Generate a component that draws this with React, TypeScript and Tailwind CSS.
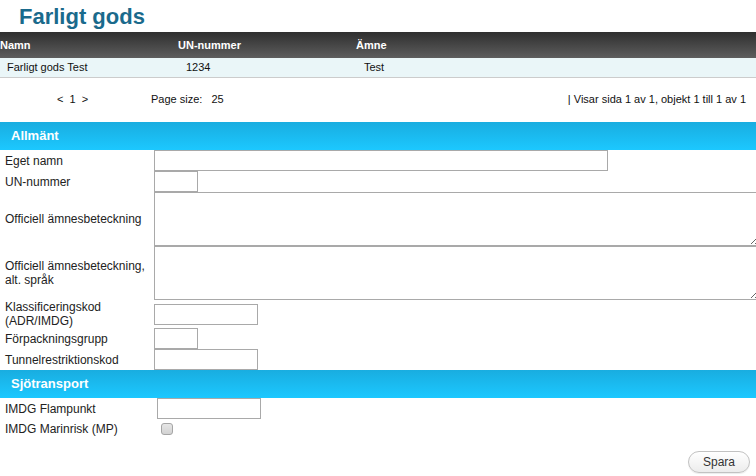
import React from "react";

const inputCls =
  "block h-[21px] border border-[#a9a9a9] bg-white outline-none";

const SectionHeader = ({ title }: { title: string }) => (
  <div className="h-[28px] bg-gradient-to-b from-[#19ade0] to-[#1cc8ff] flex items-center pl-[11px]">
    <span className="text-[13px] font-bold text-white">{title}</span>
  </div>
);

const FormRow = ({
  label,
  children,
  labelWidth = "w-[154px]",
}: {
  label: React.ReactNode;
  children: React.ReactNode;
  labelWidth?: string;
}) => (
  <div className="flex items-center">
    <div className={`${labelWidth} shrink-0 pl-[5px] text-[12px] leading-[14px] text-[#222]`}>
      {label}
    </div>
    <div className="flex-1">{children}</div>
  </div>
);

const App = () => {
  return (
    <div className="w-[756px] h-[476px] overflow-hidden bg-white font-['Liberation_Sans',Arial,sans-serif] text-[#111]">
      <div className="h-[32px] pl-[19px] pt-[4px]">
        <h1 className="text-[22px] leading-[25px] font-bold text-[#1a6a8c]">Farligt gods</h1>
      </div>

      {/* list */}
      <div className="grid grid-cols-[178px_178px_1fr] h-[26px] items-center bg-gradient-to-b from-[#2f2f2f] to-[#5e5e5e] text-[11px] font-bold text-white">
        <span>Namn</span>
        <span>UN-nummer</span>
        <span>Ämne</span>
      </div>
      <div className="grid grid-cols-[178px_178px_1fr] h-[20px] items-center bg-[#eaf6f8] border-b border-[#cccccc] text-[11px]">
        <span className="pl-[7px]">Farligt gods Test</span>
        <span className="pl-[8px]">1234</span>
        <span className="pl-[8px]">Test</span>
      </div>
      <div className="h-[44px] flex items-center text-[11px] pb-[2px]">
        <span className="pl-[57px] w-[151px]">&lt;&nbsp; 1 &nbsp;&gt;</span>
        <span>Page size:</span>
        <span className="ml-[9px]">25</span>
        <span className="ml-auto pr-[10px]">| Visar sida 1 av 1, objekt 1 till 1 av 1</span>
      </div>

      {/* Allmänt */}
      <SectionHeader title="Allmänt" />
      <div className="flex flex-col">
        <FormRow label="Eget namn">
          <input className={`${inputCls} w-[454px]`} />
        </FormRow>
        <FormRow label="UN-nummer">
          <input className={`${inputCls} w-[44px]`} />
        </FormRow>
        <FormRow label="Officiell ämnesbeteckning">
          <textarea className="block h-[54px] w-[606px] border border-[#a9a9a9] outline-none resize" />
        </FormRow>
        <FormRow label={<>Officiell ämnesbeteckning,<br />alt. språk</>}>
          <textarea className="block h-[54px] w-[606px] border border-[#a9a9a9] outline-none resize" />
        </FormRow>
        <FormRow label={<>Klassificeringskod<br />(ADR/IMDG)</>}>
          <input className={`${inputCls} w-[104px]`} />
        </FormRow>
        <FormRow label="Förpackningsgrupp">
          <input className={`${inputCls} w-[44px]`} />
        </FormRow>
        <FormRow label="Tunnelrestriktionskod">
          <input className={`${inputCls} w-[104px]`} />
        </FormRow>
      </div>

      {/* Sjötransport */}
      <SectionHeader title="Sjötransport" />
      <div className="flex flex-col">
        <FormRow label="IMDG Flampunkt" labelWidth="w-[157px]">
          <input className={`${inputCls} w-[104px]`} />
        </FormRow>
        <div className="flex items-center h-[19px]">
          <div className="w-[161px] shrink-0 pl-[5px] text-[12px] leading-[14px] text-[#222]">
            IMDG Marinrisk (MP)
          </div>
          <input
            type="checkbox"
            className="appearance-none w-[12px] h-[12px] rounded-[3px] border border-[#a5a5a5] bg-gradient-to-b from-[#e6e6e6] to-[#d2d2d2] m-0"
          />
        </div>
      </div>

      <div className="flex justify-end pr-[6px] mt-[13px]">
        <button className="w-[62px] h-[22px] rounded-full border border-[#c2c2c2] bg-gradient-to-b from-white to-[#ececec] text-[12px] text-[#333] shadow-[0_1px_1px_rgba(0,0,0,0.08)]">
          Spara
        </button>
      </div>
    </div>
  );
};

export default App;
